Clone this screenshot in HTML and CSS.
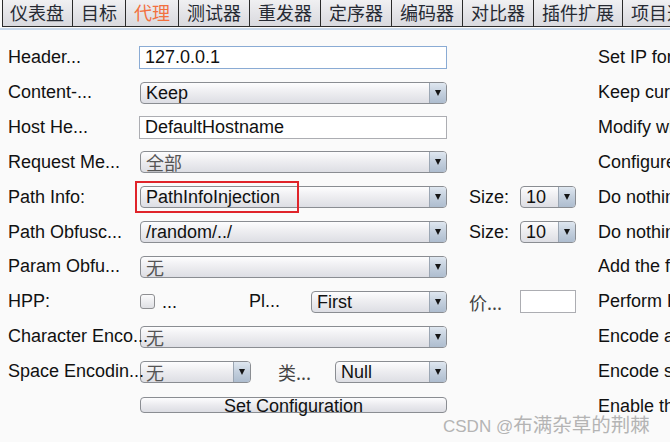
FILE: index.html
```html
<!DOCTYPE html>
<html lang="zh">
<head>
<meta charset="utf-8">
<title>代理</title>
<link rel="stylesheet" href="styles.css">
</head>
<body>
<nav class="tabs">
  <div class="tab first">仪表盘</div>
  <div class="tab">目标</div>
  <div class="tab active">代理</div>
  <div class="tab">测试器</div>
  <div class="tab">重发器</div>
  <div class="tab">定序器</div>
  <div class="tab">编码器</div>
  <div class="tab">对比器</div>
  <div class="tab">插件扩展</div>
  <div class="tab">项目选项</div>
</nav>
<div class="rule"></div>
<main class="form">
  <div class="lbl">Header...</div>
  <div class="ctl"><div class="inp focus">127.0.0.1</div></div>
  <div class="desc">Set IP for Host header</div>

  <div class="lbl">Content-...</div>
  <div class="ctl"><div class="sel"><span class="val">Keep</span><span class="arr"></span></div></div>
  <div class="desc">Keep current Content-Type</div>

  <div class="lbl">Host He...</div>
  <div class="ctl"><div class="inp">DefaultHostname</div></div>
  <div class="desc">Modify what Host header to use</div>

  <div class="lbl">Request Me...</div>
  <div class="ctl"><div class="sel"><span class="val cjk">全部</span><span class="arr"></span></div></div>
  <div class="desc">Configure request method</div>

  <div class="lbl">Path Info:</div>
  <div class="ctl mark-host"><div class="sel"><span class="val">PathInfoInjection</span><span class="arr"></span></div><div class="mark"></div></div>
  <div class="slbl">Size:</div>
  <div class="sctl"><div class="sel"><span class="val">10</span><span class="arr"></span></div></div>
  <div class="desc">Do nothing</div>

  <div class="lbl">Path Obfusc...</div>
  <div class="ctl"><div class="sel"><span class="val">/random/../</span><span class="arr"></span></div></div>
  <div class="slbl">Size:</div>
  <div class="sctl"><div class="sel"><span class="val">10</span><span class="arr"></span></div></div>
  <div class="desc">Do nothing</div>

  <div class="lbl">Param Obfu...</div>
  <div class="ctl"><div class="sel"><span class="val cjk">无</span><span class="arr"></span></div></div>
  <div class="desc">Add the following</div>

  <div class="lbl">HPP:</div>
  <div class="ctl hpp">
    <div class="chk-wrap"><span class="chk"></span><span class="dots">...</span></div>
    <div class="pl">Pl...</div>
    <div class="sel"><span class="val">First</span><span class="arr"></span></div>
  </div>
  <div class="slbl cjk-l">价...</div>
  <div class="sctl"><div class="inp small"></div></div>
  <div class="desc">Perform HPP</div>

  <div class="lbl">Character Enco...</div>
  <div class="ctl"><div class="sel"><span class="val cjk">无</span><span class="arr"></span></div></div>
  <div class="desc">Encode all characters</div>

  <div class="lbl">Space Encodin...</div>
  <div class="ctl space">
    <div class="sel"><span class="val cjk">无</span><span class="arr"></span></div>
    <div class="type cjk-l">类...</div>
    <div class="sel"><span class="val">Null</span><span class="arr"></span></div>
  </div>
  <div class="desc">Encode spaces</div>

  <div class="lbl"></div>
  <div class="ctl"><div class="btn">Set Configuration</div></div>
  <div class="desc">Enable the configuration</div>
</main>
<div class="watermark"><span class="wm-l">CSDN @</span><span class="wm-c">布满杂草的荆棘</span></div>
</body>
</html>
```
FILE: styles.css
```css
html, body {
  margin: 0;
  padding: 0;
}
body {
  width: 670px;
  height: 442px;
  overflow: hidden;
  background: #fafafa;
  font-family: "Liberation Sans", Arial, sans-serif;
  font-size: 18px;
  color: #111;
  position: relative;
}
.tabs {
  display: flex;
  height: 26px;
  margin-left: 2px;
  border-left: 1px solid #2b2b2b;
  border-bottom: 1px solid #2b2b2b;
  white-space: nowrap;
  overflow: hidden;
}
.tab {
  flex: none;
  height: 26px;
  line-height: 25px;
  padding: 0 8px;
  border-right: 1px solid #2b2b2b;
  background: linear-gradient(#f0f0f2, #e2e2e6 60%, #d9d9de);
  font-family: "Noto Sans CJK SC", sans-serif;
  font-size: 18px;
  color: #262a33;
}
.tab.first {
  padding-left: 7px;
}
.tab.active {
  color: #f2703f;
}
.rule {
  height: 2px;
  margin-top: 1px;
  background: #c8d8eb;
}
.form {
  display: grid;
  grid-template-columns: 131px 308px 22px 51px 56px 22px minmax(0, 1fr);
  grid-auto-rows: 34.85px;
  align-items: center;
  padding: 10.5px 0 0 8px;
}
.lbl {
  grid-column: 1;
  white-space: nowrap;
  z-index: 1;
}
.ctl {
  grid-column: 2;
  padding-left: 1px;
}
.slbl {
  grid-column: 4;
  white-space: nowrap;
}
.sctl {
  grid-column: 5;
}
.desc {
  grid-column: 7;
  white-space: nowrap;
  overflow: hidden;
}
.cjk, .cjk-l {
  font-family: "Noto Sans CJK SC", sans-serif;
}
.cjk {
  color: #555;
}
.cjk-l {
  color: #444;
}
.inp {
  height: 23px;
  box-sizing: border-box;
  margin-left: -1px;
  border: 1px solid #acadb2;
  background: #fff;
  padding-left: 5px;
  line-height: 21px;
  white-space: nowrap;
}
.inp.focus {
  border-color: #8aabd4;
}
.inp.small {
  margin-left: 0;
}
.sel {
  height: 22px;
  box-sizing: border-box;
  border: 1px solid #8a8d92;
  border-radius: 4px;
  background: linear-gradient(#fdfdfe, #eeeef1 45%, #dddee4);
  display: flex;
  align-items: center;
  overflow: hidden;
}
.sel .val {
  flex: 1;
  min-width: 0;
  padding-left: 5px;
  white-space: nowrap;
  line-height: 20px;
}
.sel .arr {
  flex: none;
  width: 16px;
  align-self: stretch;
  border-left: 1px solid #9ba6b3;
  background: linear-gradient(#dfe7f0, #c3cfdd 50%, #aebdcf);
  display: flex;
  align-items: center;
  justify-content: center;
}
.sel .arr::before {
  content: "";
  border-left: 3.5px solid transparent;
  border-right: 3.5px solid transparent;
  border-top: 6px solid #151515;
}
.mark-host {
  position: relative;
}
.mark {
  position: absolute;
  left: -4px;
  top: -5px;
  width: 160px;
  height: 28px;
  border: 2px solid #e0242a;
}
.hpp {
  display: grid;
  grid-template-columns: 109px 62px 1fr;
  align-items: center;
}
.chk-wrap {
  display: flex;
  align-items: center;
  gap: 7px;
}
.chk {
  width: 13px;
  height: 13px;
  border: 1px solid #8e8f92;
  border-radius: 3px;
  background: linear-gradient(#fbfbfc, #dfe0e4);
}
.dots {
  line-height: 1;
}
.space {
  display: grid;
  grid-template-columns: 111px 1fr 112px;
  align-items: center;
}
.type {
  padding-left: 27px;
}
.btn {
  height: 16px;
  box-sizing: border-box;
  border: 1px solid #8a8d92;
  border-radius: 4px;
  background: linear-gradient(#fdfdfe, #ebebef 50%, #dcdde3);
  text-align: center;
  line-height: 16px;
  margin-top: -3px;
  white-space: nowrap;
}
.watermark {
  position: absolute;
  left: 443px;
  top: 414px;
  color: #b4b4b4;
  white-space: nowrap;
  line-height: 20px;
}
.wm-l {
  font-size: 17px;
}
.wm-c {
  font-family: "Noto Sans CJK SC", sans-serif;
  font-size: 19.5px;
}
```
